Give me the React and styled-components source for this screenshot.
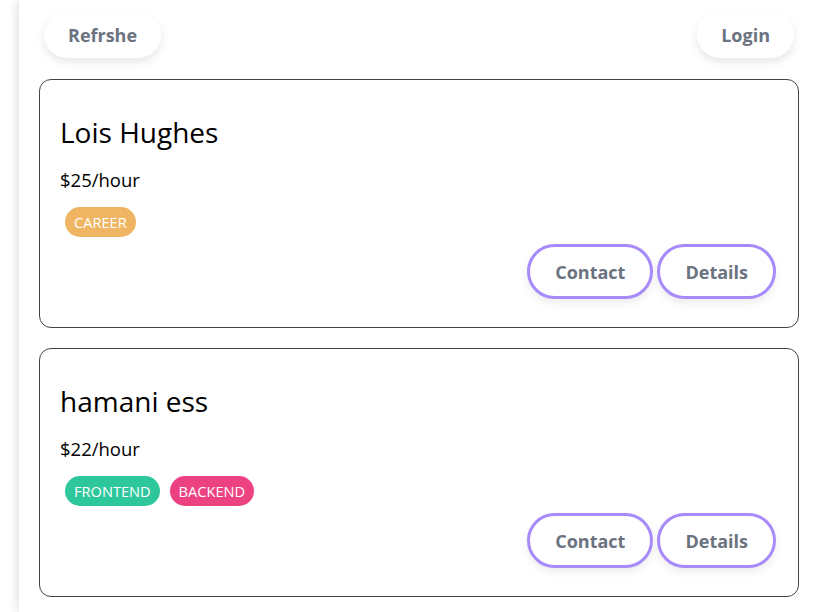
import React from "react";
import styled, { createGlobalStyle } from "styled-components";

const Global = createGlobalStyle`
  html, body { margin: 0; padding: 0; background: #fff; overflow-x: hidden; }
  body { font-family: "Open Sans", "Noto Sans", sans-serif; }
`;

const Page = styled.div`
  margin-left: 19px;
  width: 800px;
  min-height: 612px;
  box-sizing: border-box;
  background: #fff;
  box-shadow: -2px 0 10px rgba(0, 0, 0, 0.12);
`;

const Header = styled.header`
  display: flex;
  justify-content: space-between;
  align-items: center;
  padding: 12px 25px 0;
`;

const PillButton = styled.button`
  height: 46px;
  padding: 0 24px;
  border: none;
  border-radius: 23px;
  background: #fff;
  color: #6b7280;
  font-family: inherit;
  font-size: 18px;
  font-weight: 700;
  box-shadow: 0 4px 8px rgba(0, 0, 0, 0.1);
  cursor: pointer;
`;

const List = styled.div`
  display: flex;
  flex-direction: column;
  gap: 20px;
  padding: 21px 20px 0;
`;

const Card = styled.div`
  border: 1px solid #444;
  border-radius: 12px;
  padding: 32px 22px 28px 20px;
  display: flex;
  flex-direction: column;
`;

const Name = styled.h2`
  margin: 0;
  font-size: 28px;
  font-weight: 400;
  line-height: 40px;
  color: #000;
`;

const Rate = styled.div`
  margin-top: 16px;
  font-size: 18.5px;
  line-height: 24px;
  color: #000;
`;

const Tags = styled.div`
  display: flex;
  margin-top: 15px;
`;

const Tag = styled.span`
  margin: 0 5px;
  height: 30px;
  line-height: 30px;
  padding: 0 9px;
  border-radius: 15px;
  background: ${(p) => p.$bg};
  color: #fff;
  font-size: 14.6px;
  text-transform: uppercase;
`;

const Actions = styled.div`
  display: flex;
  justify-content: flex-end;
  gap: 4px;
  margin-top: 7px;
`;

const OutlineButton = styled.button`
  height: 55px;
  padding: 0 25px;
  border: 3px solid #a78bfa;
  border-radius: 28px;
  background: #fff;
  color: #6b7280;
  font-family: inherit;
  font-size: 18px;
  font-weight: 700;
  box-shadow: 0 4px 8px rgba(0, 0, 0, 0.08);
  cursor: pointer;
`;

const tagColors = {
  career: "#f0b562",
  frontend: "#2ec79c",
  backend: "#ec4281",
};

const coaches = [
  { name: "Lois Hughes", rate: 25, areas: ["career"] },
  { name: "hamani ess", rate: 22, areas: ["frontend", "backend"] },
];

export default function App() {
  return (
    <>
      <Global />
      <Page>
        <Header>
          <PillButton>Refrshe</PillButton>
          <PillButton>Login</PillButton>
        </Header>
        <List>
          {coaches.map((c) => (
            <Card key={c.name}>
              <Name>{c.name}</Name>
              <Rate>${c.rate}/hour</Rate>
              <Tags>
                {c.areas.map((a) => (
                  <Tag key={a} $bg={tagColors[a]}>{a}</Tag>
                ))}
              </Tags>
              <Actions>
                <OutlineButton>Contact</OutlineButton>
                <OutlineButton>Details</OutlineButton>
              </Actions>
            </Card>
          ))}
        </List>
      </Page>
    </>
  );
}
